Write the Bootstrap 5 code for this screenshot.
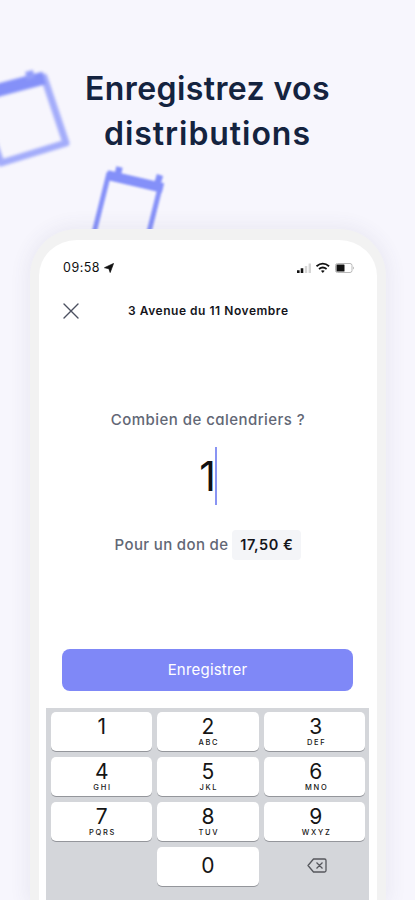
<!DOCTYPE html>
<html lang="fr">
<head>
<meta charset="utf-8">
<meta name="viewport" content="width=device-width, initial-scale=1">
<title>Enregistrez vos distributions</title>
<link href="https://cdn.jsdelivr.net/npm/bootstrap@5.3.0/dist/css/bootstrap.min.css" rel="stylesheet">
<style>
body{background:#f7f6fd;font-family:Inter,"Liberation Sans",sans-serif;font-feature-settings:"cv11";color:#111}
.stage{height:900px;max-width:415px}
.decor{top:0;left:0;z-index:0}
.headline{margin-top:66px;font-size:32px;line-height:45px;font-weight:600;color:#14233f;letter-spacing:.4px}
.headline span{display:block}
.headline span+span{letter-spacing:.95px}
.phone{margin:73px 29px 0 30px;height:671px;border:9px solid #f2f2f2;border-top-width:11px;border-bottom:0;border-radius:47px 47px 0 0;background:#fff;box-shadow:0 0 18px 4px rgba(70,70,110,.07);z-index:1}
.status{margin-top:19px;padding:0 22px 0 24px;height:18px}
.clock{font-size:12.5px;line-height:18px;letter-spacing:.5px}
.topbar{margin-top:17px;height:34px;padding-left:24px}
.place{font-size:12px;line-height:18px;font-weight:600;margin-left:49px;color:#15151b;letter-spacing:.53px}
.question{margin-top:81px;font-size:15px;line-height:22px;font-weight:500;color:#626775;letter-spacing:.45px}
.amount{margin-top:16px;height:58px;font-size:41px;line-height:58px;color:#111}
.digit{letter-spacing:-1px}
.caret{width:2px;height:58px;background:#8994f3}
.gift{margin-top:25px;height:30px;font-size:15px;font-weight:500;color:#626775;letter-spacing:.35px}
.chip{background:#f4f5f8;border-radius:4px;width:69px;height:30px;color:#15151b;font-size:14.5px;font-weight:600;letter-spacing:.55px}
.save{margin:89px 24px 0 23px;height:42px;background:#7f88f7;border-radius:8px;color:#fff;font-size:15px;font-weight:400;border:0;letter-spacing:.2px}
.keys{margin:17px 8px 0 7px;height:194px;background:#d4d6da;padding:4px 4px 0 5px;display:grid;grid-template-columns:repeat(3,1fr);grid-auto-rows:39px;gap:6px 5px;align-content:start}
.key{background:#fff;border-radius:5px;box-shadow:0 1px 0 #94969b;font-size:21px;line-height:22px;padding-top:4px;color:#151515}
.key:nth-child(3n){padding-left:3px}
.key small{display:block;font-size:7.5px;line-height:9px;letter-spacing:1.7px;padding-left:1.7px;font-weight:500}
.zero{padding-top:8px}
.erase{padding:0 0 2px 5px}
</style>
<script src="https://cdn.jsdelivr.net/npm/bootstrap@5.3.0/dist/js/bootstrap.bundle.min.js"></script>
</head>
<body>
<main class="stage position-relative overflow-hidden d-flex flex-column">
  <svg class="decor position-absolute" width="200" height="240" viewBox="0 0 200 240" aria-hidden="true">
    <g style="filter:blur(1.6px)" fill="none">
      <path d="M-22 96L44 77L66 143L1 163Z" stroke="#a3acfa" stroke-width="7" stroke-linejoin="round"/>
      <path d="M-20 95L44 78" stroke="#8490f8" stroke-width="13"/>
      <path d="M29 71L31 79" stroke="#929df9" stroke-width="8"/>
    </g>
    <g style="filter:blur(.8px)" fill="none">
      <path d="M94 233L108.500 175L160 188L148 236" stroke="#8792f8" stroke-width="5"/>
      <path d="M107 175L163 188" stroke="#8490f9" stroke-width="10"/>
      <path d="M119.500 167L117.500 176M160 175L157 185" stroke="#8490f9" stroke-width="6.500"/>
    </g>
  </svg>
  <h1 class="headline text-center mb-0 position-relative"><span>Enregistrez vos</span><span>distributions</span></h1>
  <section class="phone position-relative flex-shrink-0">
    <div class="status d-flex align-items-center justify-content-between">
      <div class="d-flex align-items-center"><span class="clock">09:58</span>
        <svg class="ms-1" width="10" height="10" viewBox="0 0 11 11"><path d="M10.500.5L6.800 10.500L5.300 6.200L.5 5.200Z" fill="#111" stroke="#111" stroke-width=".8" stroke-linejoin="round"/></svg>
      </div>
      <svg width="58" height="12" viewBox="0 0 58 12">
        <path d="M0 8.200h2.600V11H0zM3.700 6.300h2.600V11H3.700z" fill="#111"/>
        <path d="M7.800 4h2.400v7H7.800zM11.600 1.500H14V11h-2.400z" fill="#d5d5d5"/>
        <g fill="none" stroke="#111" stroke-width="1.800"><path d="M19.500 4.300Q25.800-1 32.100 4.300M22 7Q25.800 4 29.600 7"/></g>
        <path d="M23.900 8.800Q25.800 7.500 27.700 8.800L25.800 11Z" fill="#111"/>
        <rect x="38.500" y="1.500" width="16.500" height="9" rx="2" fill="none" stroke="#b8b8b8"/>
        <rect x="39.500" y="2.500" width="8" height="7" rx=".5" fill="#111"/><path d="M56 4.500Q58 6 56 7.500Z" fill="#b8b8b8"/>
      </svg>
    </div>
    <div class="topbar d-flex align-items-center">
      <svg width="16" height="16" viewBox="0 0 16 16"><path d="M1 1L15 15M15 1L1 15" stroke="#4b5060" stroke-width="1.400" stroke-linecap="round"/></svg>
      <span class="place">3 Avenue du 11 Novembre</span>
    </div>
    <div class="question text-center">Combien de calendriers ?</div>
    <div class="amount d-flex justify-content-center align-items-center"><span class="digit">1</span><span class="caret"></span></div>
    <div class="gift d-flex justify-content-center align-items-center gap-1"><span>Pour un don de</span><span class="chip d-flex align-items-center justify-content-center">17,50 €</span></div>
    <div class="d-grid"><button class="save btn p-0" type="button">Enregistrer</button></div>
    <div class="keys text-center">
      <div class="key">1</div><div class="key">2<small>ABC</small></div><div class="key">3<small>DEF</small></div>
      <div class="key">4<small>GHI</small></div><div class="key">5<small>JKL</small></div><div class="key">6<small>MNO</small></div>
      <div class="key">7<small>PQRS</small></div><div class="key">8<small>TUV</small></div><div class="key">9<small>WXYZ</small></div>
      <div></div><div class="key zero">0</div>
      <div class="erase d-flex align-items-center justify-content-center"><svg width="20" height="15" viewBox="0 0 20 15" fill="none" stroke="#55575c" stroke-width="1.300" stroke-linejoin="round"><path d="M6.500 1H17.500Q19 1 19 2.500V12.500Q19 14 17.500 14H6.500L1 7.500ZM9.500 4.500L15.500 10.500M15.500 4.500L9.500 10.500"/></svg></div>
    </div>
  </section>
</main>
</body>
</html>
